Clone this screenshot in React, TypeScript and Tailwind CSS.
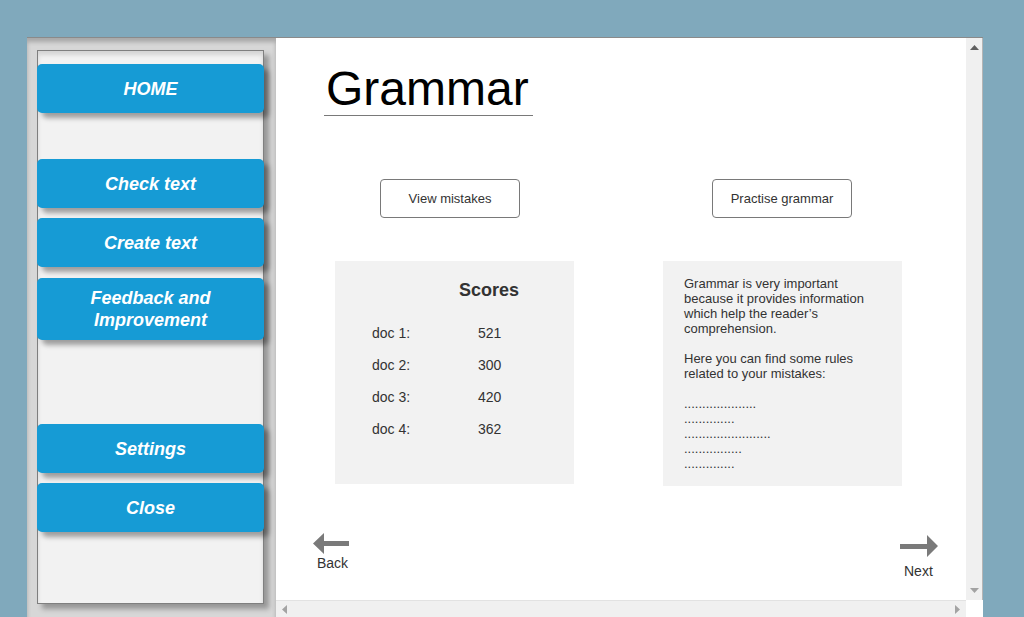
import React from "react";

const navButtons = [
  { label: "HOME", mt: "mt-[13px]", h: "h-[49px]" },
  { label: "Check text", mt: "mt-[46px]", h: "h-[49px]" },
  { label: "Create text", mt: "mt-[10px]", h: "h-[49px]" },
  { label: "Feedback and\nImprovement", mt: "mt-[11px]", h: "h-[62px]" },
  { label: "Settings", mt: "mt-[84px]", h: "h-[49px]" },
  { label: "Close", mt: "mt-[10px]", h: "h-[49px]" },
];

const scores = [
  { doc: "doc 1:", value: "521" },
  { doc: "doc 2:", value: "300" },
  { doc: "doc 3:", value: "420" },
  { doc: "doc 4:", value: "362" },
];

const App = () => {
  return (
    <div className="min-h-screen bg-[#80a9bc] pl-[27px] pt-[37px] font-['Liberation_Sans',Arial,sans-serif]">
      <div className="flex w-[956px] h-[580px] border-t border-[#8a8a8a]">
        {/* sidebar */}
        <div className="w-[249px] h-full bg-[#d7d7d7] pl-[10px] pt-[12px] shadow-[inset_0_4px_4px_rgba(0,0,0,0.22)]">
          <div className="flex flex-col w-[227px] h-[554px] bg-[#f2f2f2] border border-[#7f7f7f] shadow-[5px_5px_5px_rgba(0,0,0,0.3),inset_0_4px_4px_rgba(0,0,0,0.12)]">
            {navButtons.map((b) => (
              <button
                key={b.label}
                className={`${b.mt} ${b.h} -mx-px w-[227px] flex items-center justify-center rounded-[5px] bg-[#169bd5] text-white text-[18px] leading-[22px] font-bold italic whitespace-pre-line shadow-[5px_5px_5px_rgba(0,0,0,0.35)]`}
              >
                {b.label}
              </button>
            ))}
          </div>
        </div>

        {/* main area */}
        <div className="flex flex-col w-[707px] h-full">
          <div className="flex h-[562px]">
            <div className="flex flex-col w-[690px] h-full bg-white">
              <div className="mt-[27px] ml-[48px] w-[209px] pl-[2px] pb-[2px] border-b border-[#797979]">
                <h1 className="text-[48px] leading-[48px] text-black">Grammar</h1>
              </div>

              <div className="flex mt-[63px] ml-[104px]">
                <button className="w-[140px] h-[39px] border border-[#797979] rounded-[4px] bg-white text-[13px] text-[#333]">
                  View mistakes
                </button>
                <button className="ml-[192px] w-[140px] h-[39px] border border-[#797979] rounded-[4px] bg-white text-[13px] text-[#333]">
                  Practise grammar
                </button>
              </div>

              <div className="flex items-start mt-[43px]">
                <div className="ml-[59px] w-[239px] h-[223px] bg-[#f2f2f2] text-[#333]">
                  <div className="pt-[19px] pl-[124px] text-[18px] leading-[20px] font-bold">
                    Scores
                  </div>
                  <div className="mt-[17px] pl-[37px]">
                    {scores.map((s) => (
                      <div key={s.doc} className="flex text-[14px] leading-[32px]">
                        <span className="w-[106px]">{s.doc}</span>
                        <span>{s.value}</span>
                      </div>
                    ))}
                  </div>
                </div>

                <div className="ml-[89px] w-[239px] h-[225px] bg-[#f2f2f2] pt-[15px] pl-[21px] text-[13px] leading-[15px] text-[#333] whitespace-nowrap">
                  <p>Grammar is very important</p>
                  <p>because it provides information</p>
                  <p>which help the reader’s</p>
                  <p>comprehension.</p>
                  <p className="mt-[15px]">Here you can find some rules</p>
                  <p>related to your mistakes:</p>
                  <p className="mt-[15px]">....................</p>
                  <p>..............</p>
                  <p>........................</p>
                  <p>................</p>
                  <p>..............</p>
                </div>
              </div>

              <div className="flex justify-between items-start mt-[46px]">
                <div className="ml-[37px] flex flex-col">
                  <svg width="36" height="23" viewBox="0 0 36 23">
                    <polygon points="0,11.5 11,1 11,9 36,9 36,14 11,14 11,22" fill="#7a7a7a" />
                  </svg>
                  <span className="ml-[4px] text-[14px] leading-[16px] text-[#333]">Back</span>
                </div>
                <div className="mr-[28px] mt-[3px] flex flex-col">
                  <svg width="38" height="22" viewBox="0 0 38 22">
                    <polygon points="0,9 27,9 27,0 38,11 27,22 27,14 0,14" fill="#7a7a7a" />
                  </svg>
                  <span className="ml-[4px] mt-[6px] text-[14px] leading-[16px] text-[#333]">Next</span>
                </div>
              </div>
            </div>

            {/* vertical scrollbar */}
            <div className="w-[17px] h-full bg-[#f0f0f0] border-r border-[#b5b5b5] flex flex-col items-center justify-between py-[7px]">
              <svg width="9" height="5" viewBox="0 0 9 5">
                <polygon points="0,5 4.5,0 9,5" fill="#606060" />
              </svg>
              <svg width="9" height="5" viewBox="0 0 9 5">
                <polygon points="0,0 9,0 4.5,5" fill="#a3a3a3" />
              </svg>
            </div>
          </div>

          {/* horizontal scrollbar */}
          <div className="flex h-[17px]">
            <div className="w-[690px] h-full bg-[#f0f0f0] border-t border-[#e2e2e2] flex items-center justify-between px-[6px]">
              <svg width="5" height="9" viewBox="0 0 5 9">
                <polygon points="5,0 5,9 0,4.5" fill="#a3a3a3" />
              </svg>
              <svg width="5" height="9" viewBox="0 0 5 9">
                <polygon points="0,0 5,4.5 0,9" fill="#a3a3a3" />
              </svg>
            </div>
            <div className="w-[17px] h-full bg-white" />
          </div>
        </div>
      </div>
    </div>
  );
};

export default App;
